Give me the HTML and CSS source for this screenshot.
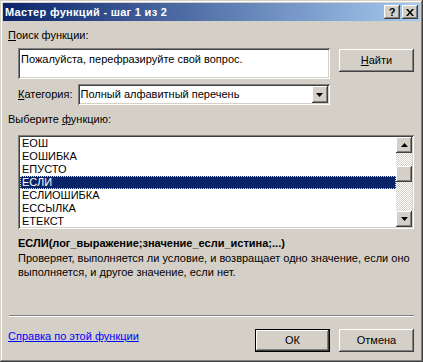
FILE: index.html
```html
<!DOCTYPE html>
<html lang="ru">
<head>
<meta charset="utf-8">
<title>Мастер функций - шаг 1 из 2</title>
<link rel="stylesheet" href="styles.css">
</head>
<body>
<div class="win">
  <div class="titlebar">
    <span class="title">Мастер функций - шаг 1 из 2</span>
    <div class="tbtns">
      <div class="tbtn raised q">?</div>
      <div class="tbtn raised"><svg width="8" height="7" viewBox="0 0 8 7"><path d="M0 0h2l2 2.5L6 0h2L5 3.5L8 7H6L4 4.5L2 7H0l3-3.5z" fill="#000"/></svg></div>
    </div>
  </div>
  <div class="content">
    <div class="label l1"><u>П</u>оиск функции:</div>
    <div class="search-row">
      <div class="field search">Пожалуйста, перефразируйте свой вопрос.</div>
      <div class="btn raised find"><u>Н</u>айти</div>
    </div>
    <div class="cat-row">
      <span class="label"><u>К</u>атегория:</span>
      <div class="field combo">
        <span class="combo-text">Полный алфавитный перечень</span>
        <div class="dd raised"><svg width="7" height="4" viewBox="0 0 7 4"><path d="M0 0h7L3.5 4z" fill="#000"/></svg></div>
      </div>
    </div>
    <div class="label l2">Выберите <u>ф</u>ункцию:</div>
    <div class="field list">
      <ul class="items">
        <li>ЕОШ</li>
        <li>ЕОШИБКА</li>
        <li>ЕПУСТО</li>
        <li class="sel">ЕСЛИ</li>
        <li>ЕСЛИОШИБКА</li>
        <li>ЕССЫЛКА</li>
        <li>ЕТЕКСТ</li>
      </ul>
      <div class="scrollbar">
        <div class="sbtn raised"><svg width="7" height="4" viewBox="0 0 7 4"><path d="M0 4h7L3.5 0z" fill="#000"/></svg></div>
        <div class="track">
          <div class="thumb raised"></div>
        </div>
        <div class="sbtn raised"><svg width="7" height="4" viewBox="0 0 7 4"><path d="M0 0h7L3.5 4z" fill="#000"/></svg></div>
      </div>
    </div>
    <div class="sig">ЕСЛИ(лог_выражение;значение_если_истина;...)</div>
    <div class="desc">Проверяет, выполняется ли условие, и возвращает одно значение, если оно выполняется, и другое значение, если нет.</div>
    <div class="sep"></div>
    <div class="footer">
      <a class="help" href="#">Справка по этой функции</a>
      <div class="btns">
        <div class="btn raised default">ОК</div>
        <div class="btn raised">Отмена</div>
      </div>
    </div>
  </div>
</div>
</body>
</html>
```

FILE: styles.css
```css
* { box-sizing: border-box; }
html, body { margin: 0; padding: 0; }
body {
  width: 423px;
  height: 362px;
  overflow: hidden;
  background: #d4d0c8;
  font-family: "Liberation Sans", Arial, sans-serif;
  font-size: 11px;
  line-height: 13px;
  color: #000;
}
.win {
  width: 423px;
  height: 362px;
  padding: 3px;
  display: flex;
  flex-direction: column;
  background: #d4d0c8;
  box-shadow: inset -1px -1px #404040, inset 1px 1px #d4d0c8, inset -2px -2px #808080, inset 2px 2px #fff;
}
.raised {
  background: #d4d0c8;
  box-shadow: inset -1px -1px #404040, inset 1px 1px #fff, inset -2px -2px #808080, inset 2px 2px #d4d0c8;
}
.titlebar {
  height: 18px;
  flex: none;
  display: flex;
  align-items: center;
  justify-content: space-between;
  padding-left: 2px;
  padding-right: 2px;
  background: linear-gradient(to right, #0a246a, #a6caf0);
}
.title {
  color: #fff;
  font-weight: bold;
  font-size: 11px;
  letter-spacing: 0.3px;
}
.tbtns { display: flex; gap: 2px; }
.tbtn {
  width: 16px;
  height: 14px;
  display: flex;
  align-items: center;
  justify-content: center;
}
.tbtn.q { font-weight: bold; font-size: 11px; line-height: 14px; }
.content {
  flex: 1;
  display: flex;
  flex-direction: column;
  padding: 0 6px 7px 5px;
}
.l1 { margin-top: 8px; }
.field {
  background: #fff;
  box-shadow: inset 1px 1px #808080, inset -1px -1px #fff, inset 2px 2px #404040, inset -2px -2px #d4d0c8;
}
.search-row {
  display: flex;
  align-items: flex-start;
  margin-top: 6px;
  padding-left: 10px;
}
.search {
  width: 312px;
  height: 31px;
  padding: 5px 3px 3px;
}
.btn {
  width: 75px;
  height: 23px;
  display: flex;
  align-items: center;
  justify-content: center;
}
.find { margin-left: 9px; margin-top: 1px; }
.cat-row {
  display: flex;
  align-items: center;
  margin-top: 5px;
  padding-left: 10px;
}
.combo {
  margin-left: 5px;
  width: 252px;
  height: 21px;
  display: flex;
  align-items: center;
  justify-content: space-between;
  padding: 2px;
}
.combo-text { padding-left: 1px; }
.dd {
  width: 16px;
  height: 17px;
  display: flex;
  align-items: center;
  justify-content: center;
}
.l2 { margin-top: 8px; }
.list {
  margin-top: 9px;
  margin-left: 10px;
  width: 396px;
  height: 94px;
  padding: 2px;
  display: flex;
}
.items {
  list-style: none;
  margin: 0;
  padding: 0;
  flex: 1;
}
.items li {
  height: 13px;
  line-height: 13px;
  padding-left: 2px;
}
.items li.sel {
  background: #0a246a;
  color: #fff;
  outline: 1px dotted #e8e0a0;
  outline-offset: -1px;
}
.scrollbar {
  width: 16px;
  display: flex;
  flex-direction: column;
}
.sbtn {
  width: 16px;
  height: 16px;
  display: flex;
  align-items: center;
  justify-content: center;
}
.track {
  flex: 1;
  background-image: conic-gradient(#fff 25%, #d4d0c8 0 50%, #fff 0 75%, #d4d0c8 0);
  background-size: 2px 2px;
  padding-top: 13px;
}
.thumb { width: 16px; height: 16px; }
.sig {
  margin-top: 8px;
  padding-left: 10px;
  font-weight: bold;
}
.desc {
  margin-top: 1px;
  padding-left: 10px;
  line-height: 14px;
}
.sep {
  margin-top: auto;
  height: 2px;
  border-top: 1px solid #808080;
  border-bottom: 1px solid #fff;
  margin-left: 1px;
}
.footer {
  display: flex;
  justify-content: space-between;
  align-items: flex-start;
  margin-top: 12px;
}
.help {
  color: #0000ff;
  text-decoration: underline;
  margin-top: 1px;
}
.btns { display: flex; gap: 9px; }
.default {
  box-shadow: inset 0 0 0 1px #000, inset -2px -2px #404040, inset 2px 2px #fff, inset -3px -3px #808080;
}
```
